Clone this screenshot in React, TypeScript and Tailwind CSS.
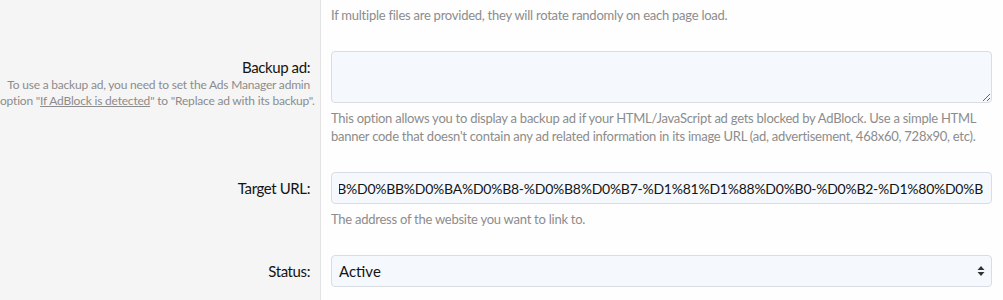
import { useEffect, useRef } from "react";
import type { ReactNode } from "react";

const font = "font-['Lato','Noto_Sans',sans-serif]";

const Row = ({
  label,
  labelHint,
  children,
  top = "pt-[14px]",
}: {
  label?: string;
  labelHint?: ReactNode;
  children: ReactNode;
  top?: string;
}) => {
  return (
    <div className="flex">
      <div className="w-[320px] shrink-0 bg-[#f5f5f5] pt-[20px] pr-[10px] pb-[13px] text-right">
        {label && (
          <div className="text-[15px] leading-[20px] tracking-[-0.4px] text-[#141414]">{label}</div>
        )}
        {labelHint && (
          <div className="text-[12px] leading-[16px] tracking-[-0.2px] text-[#8c8c8c] whitespace-nowrap">
            {labelHint}
          </div>
        )}
      </div>
      <div
        className={`min-w-0 flex-1 border-l border-[#e2e2e2] bg-[#fefefe] pl-[10px] pr-[11px] pb-[13px] ${top}`}
      >
        {children}
      </div>
    </div>
  );
};

const Hint = ({ children, className = "" }: { children: ReactNode; className?: string }) => (
  <div className={`text-[13px] leading-[18px] tracking-[-0.25px] text-[#8c8c8c] whitespace-nowrap ${className}`}>
    {children}
  </div>
);

const url =
  "https://example.com/news/%D0%BD%D0%BE%D0%B2%D1%8B%D0%B5-%D1%84%D0%B0%D0%B9%D0%BB%D1%8B%D0%BB%D0%BA%D0%B8-%D0%B8%D0%B7-%D1%81%D1%88%D0%B0-%D0%B2-%D1%80%D0%B";

export default function App() {
  const urlRef = useRef<HTMLInputElement>(null);

  useEffect(() => {
    const el = urlRef.current;
    if (el) {
      el.focus();
      el.setSelectionRange(url.length, url.length);
      el.scrollLeft = el.scrollWidth;
    }
  }, []);

  return (
    <div className={`w-[1003px] h-[300px] overflow-hidden bg-[#fefefe] ${font}`}>
      <Row top="pt-[6px]">
        <Hint>If multiple files are provided, they will rotate randomly on each page load.</Hint>
      </Row>

      <Row
        label="Backup ad:"
        labelHint={
          <>
            To use a backup ad, you need to set the Ads Manager admin
            <br />
            option "<span className="underline">If AdBlock is detected</span>" to "Replace ad with its
            backup".
          </>
        }
      >
        <textarea
          className="block w-full h-[52px] resize-y rounded-[4px] border border-[#d8dde3] bg-[#f5f9fd] px-[7px] py-[5px] text-[15px] outline-none"
          defaultValue=""
        />
        <Hint className="mt-[6px]">
          This option allows you to display a backup ad if your HTML/JavaScript ad gets blocked by AdBlock. Use a simple HTML
          <br />
          banner code that doesn't contain any ad related information in its image URL (ad, advertisement, 468x60, 728x90, etc).
        </Hint>
      </Row>

      <Row label="Target URL:">
        <input
          ref={urlRef}
          type="text"
          defaultValue={url}
          className="block h-[32px] w-full rounded-[4px] border border-[#d8dde3] bg-[#f5f9fd] pl-[7px] pr-[8px] text-[14px] tracking-[-0.25px] text-[#141414] caret-[#141414] outline-none"
        />
        <Hint className="mt-[6px]">The address of the website you want to link to.</Hint>
      </Row>

      <Row label="Status:">
        <div className="flex h-[32px] items-center justify-between rounded-[4px] border border-[#d8dde3] bg-[#f5f9fd] pl-[7px] pr-[6px]">
          <span className="text-[15px] text-[#141414]">Active</span>
          <svg width="8" height="12" viewBox="0 0 8 12" className="text-[#333]">
            <path d="M4 1 L7.5 5 H0.5 Z" fill="currentColor" />
            <path d="M4 11 L7.5 7 H0.5 Z" fill="currentColor" />
          </svg>
        </div>
      </Row>
    </div>
  );
}
